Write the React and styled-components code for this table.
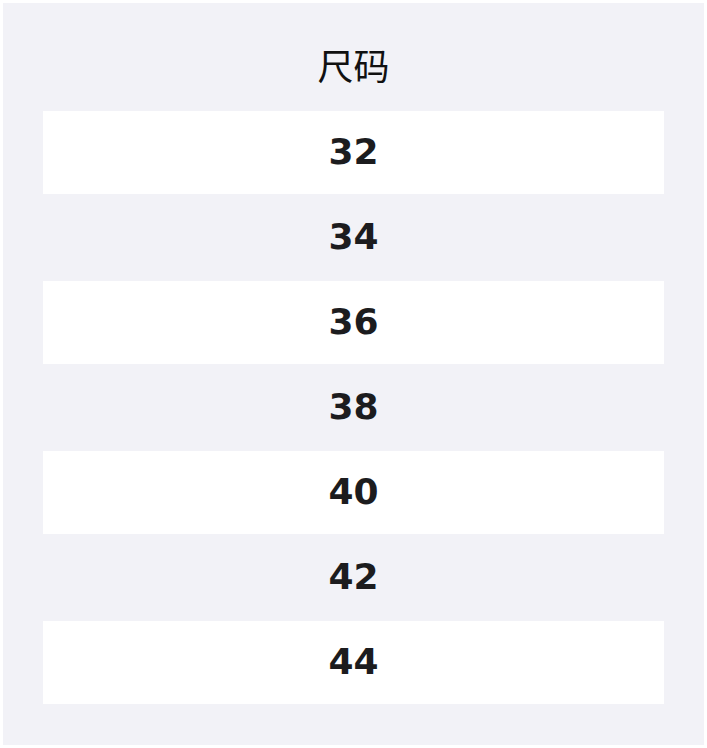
import React from "react";
import styled, { createGlobalStyle } from "styled-components";

const GlobalStyle = createGlobalStyle`
  html, body {
    margin: 0;
    padding: 0;
    background: #ffffff;
  }
  body {
    font-family: "DejaVu Sans", "Noto Sans CJK SC", sans-serif;
  }
`;

const Page = styled.div`
  padding: 3px;
`;

const Panel = styled.section`
  background: #f2f2f7;
  padding: 35px 40px 40px;
  display: flex;
  flex-direction: column;
`;

const Title = styled.h2`
  margin: 0 0 20px;
  height: 52px;
  line-height: 52px;
  text-align: center;
  font-family: "Noto Sans CJK SC", "DejaVu Sans", sans-serif;
  font-weight: 400;
  font-size: 36px;
  color: #111111;
`;

const List = styled.ul`
  list-style: none;
  margin: 0;
  padding: 0;
  display: flex;
  flex-direction: column;
`;

const Row = styled.li`
  box-sizing: border-box;
  height: 85px;
  padding-bottom: 3px;
  border-top: 1px solid transparent;
  border-bottom: 1px solid transparent;
  background-clip: padding-box;
  display: flex;
  align-items: center;
  justify-content: center;
  background-color: ${(p) => (p.$alt ? "transparent" : "#ffffff")};
  font-family: "DejaVu Sans", sans-serif;
  font-weight: 700;
  font-size: 36px;
  color: #1c1c1e;
`;

const sizes = [32, 34, 36, 38, 40, 42, 44];

export default function App() {
  return (
    <>
      <GlobalStyle />
      <Page>
        <Panel>
          <Title>尺码</Title>
          <List>
            {sizes.map((s, i) => (
              <Row key={s} $alt={i % 2 === 1}>
                {s}
              </Row>
            ))}
          </List>
        </Panel>
      </Page>
    </>
  );
}
